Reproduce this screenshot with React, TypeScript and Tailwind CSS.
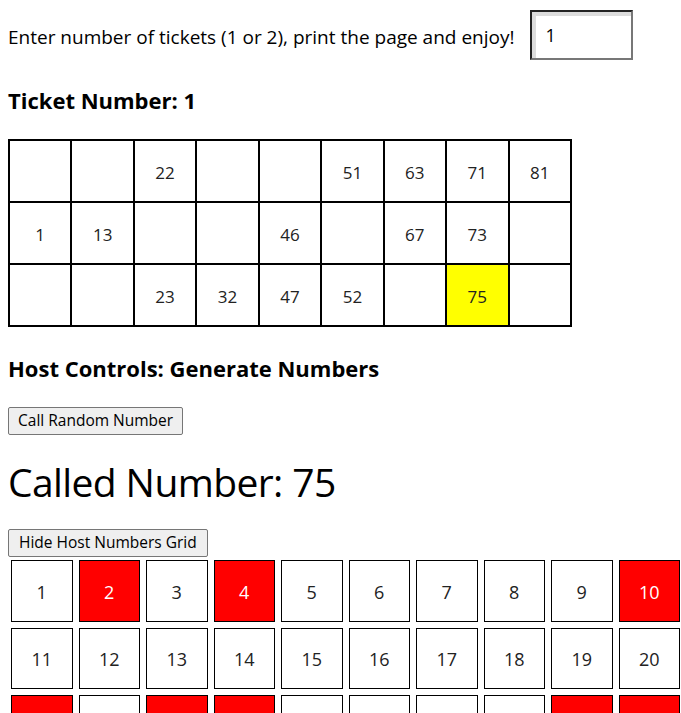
import { useState } from 'react'

const ticket: (number | null)[][] = [
  [null, null, 22, null, null, 51, 63, 71, 81],
  [1, 13, null, null, 46, null, 67, 73, null],
  [null, null, 23, 32, 47, 52, null, 75, null],
]

const called = [2, 4, 10, 21, 23, 24, 29, 30, 75]

export default function App() {
  const [count, setCount] = useState('1')
  const [showGrid, setShowGrid] = useState(true)

  return (
    <div className="w-[681px] overflow-hidden font-['Open_Sans',sans-serif] text-[18px] text-black">
      {/* Ticket count */}
      <div className="ml-[8px] mt-[10px] flex h-[50px] items-center">
        <span className="pt-[5px] text-[19px]">Enter number of tickets (1 or 2), print the page and enjoy!</span>
        <input
          value={count}
          onChange={(e) => setCount(e.target.value)}
          className="ml-[16px] h-[50px] w-[103px] border-2 border-t-[#222] border-l-[#222] border-r-[#777] border-b-[#777] pl-[13px] text-[18px] shadow-[inset_4px_4px_0_#dcdcdc] outline-none"
        />
      </div>

      <h3 className="ml-[8px] mt-[28px] text-[22px] font-bold leading-[25px]">Ticket Number: 1</h3>

      {/* Ticket */}
      <table className="ml-[8px] mt-[26px] h-[188px] w-[564px] table-fixed border-collapse border-2 border-black">
        <tbody>
          {ticket.map((row, r) => (
            <tr key={r}>
              {row.map((n, c) => (
                <td
                  key={c}
                  className={`border-2 border-black pt-[4px] text-center text-[17px] text-[#222] ${n === 75 ? 'bg-[#ffff00]' : ''}`}
                >
                  {n ?? ''}
                </td>
              ))}
            </tr>
          ))}
        </tbody>
      </table>

      <h3 className="ml-[8px] mt-[29px] text-[22px] font-bold leading-[25px]">Host Controls: Generate Numbers</h3>

      <button className="ml-[8px] mt-[26px] block h-[28px] rounded-[2px] border border-[#767676] bg-[#efefef] px-[9px] text-[15.5px] text-black">
        Call Random Number
      </button>

      <h1 className="ml-[8px] mt-[22px] text-[39px] leading-[50px] tracking-[-0.6px]">Called Number: 75</h1>

      <button
        onClick={() => setShowGrid(!showGrid)}
        className="ml-[8px] mt-[22px] block h-[28px] rounded-[2px] border border-[#767676] bg-[#efefef] px-[10px] text-[15.5px] text-black"
      >
        Hide Host Numbers Grid
      </button>

      {/* Host numbers */}
      {showGrid && (
        <div className="ml-[8px] grid w-[680px] grid-cols-[repeat(10,67.5px)]">
          {Array.from({ length: 90 }, (_, i) => i + 1).map((n) => {
            const on = called.includes(n)
            return (
              <div
                key={n}
                className={`m-[3px] flex h-[61.5px] items-center justify-center border border-black pt-[3px] text-[18px] ${on ? 'bg-[#ff0000] text-white' : 'bg-white text-[#222]'}`}
              >
                {n}
              </div>
            )
          })}
        </div>
      )}
    </div>
  )
}
